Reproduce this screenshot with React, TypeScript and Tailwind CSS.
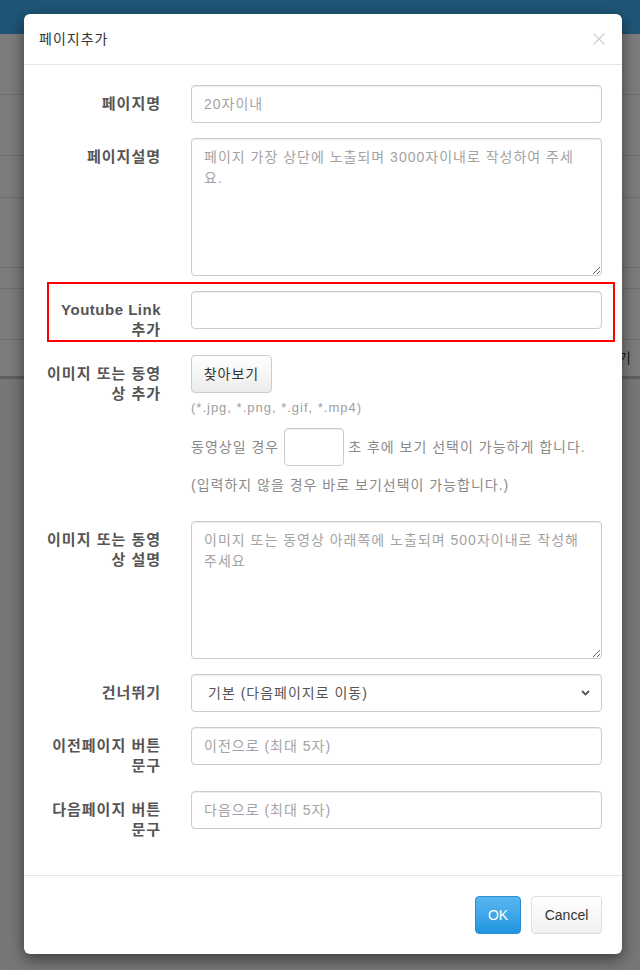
import React from "react";

function Label({ children }: { children: React.ReactNode }) {
  return (
    <div className="pt-[9px] text-right text-[15px] leading-[20px] font-bold text-[#555] tracking-[1px]">
      {children}
    </div>
  );
}

const inputCls =
  "block w-full h-[38px] rounded-[4px] border border-[#cccccc] bg-white px-[12px] text-[14px] tracking-[1px] text-[#555] shadow-[inset_0_1px_1px_rgba(0,0,0,0.075)] placeholder:text-[#a3a3a3] outline-none";

const textareaCls =
  "block w-full h-[138px] rounded-[4px] border border-[#cccccc] bg-white px-[12px] pt-[8px] text-[14px] tracking-[1px] leading-[21px] text-[#555] shadow-[inset_0_1px_1px_rgba(0,0,0,0.075)] placeholder:text-[#a3a3a3] outline-none resize-y";

export default function App() {
  return (
    <div className="relative w-[640px] min-h-[970px] bg-[#777777] overflow-hidden tracking-[1px] font-[family-name:'Liberation_Sans','Noto_Sans_CJK_KR',sans-serif]">
      {/* Background page (under backdrop) */}
      <div className="h-[34px] bg-[#1f5576]" />
      <div className="flex flex-col bg-[#7c7c7c]">
        <div className="h-[61px] border-b border-[#6d6d6d]" />
        <div className="h-[61px] border-b border-[#6d6d6d]" />
        <div className="h-[42px] border-b border-[#6d6d6d]" />
        <div className="h-[70px] border-b border-[#6d6d6d]" />
        <div className="h-[21px] border-b border-[#6d6d6d]" />
        <div className="h-[51px] border-b border-[#6d6d6d]" />
        <div className="h-[36px] flex items-center justify-end pr-[8px] text-[14px] text-[#1c1c1c]">
          미리보기
        </div>
        <div className="h-[3px] bg-[#5f5f5f]" />
      </div>

      {/* Modal */}
      <div className="absolute left-[24px] top-[14px] w-[598px] rounded-[6px] bg-white shadow-[0_5px_15px_rgba(0,0,0,0.5)]">
        <div className="h-[51px] flex items-center justify-between border-b border-[#e5e5e5] pl-[15px] pr-[17px]">
          <div className="text-[14px] text-[#333] leading-[20px]">페이지추가</div>
          <svg width="12" height="12" viewBox="0 0 12 12" className="block">
            <path d="M0.5 0.5 L11.5 11.5 M11.5 0.5 L0.5 11.5" stroke="#cfcfcf" strokeWidth="1.2" fill="none" />
          </svg>
        </div>

        <div className="flex flex-col gap-[15px] pt-[20px] pb-[35px] pl-[15px] pr-[20px]">
          <div className="grid grid-cols-[122px_1fr] gap-x-[30px]">
            <Label>페이지명</Label>
            <input className={inputCls} placeholder="20자이내" />
          </div>

          <div className="grid grid-cols-[122px_1fr] gap-x-[30px]">
            <Label>페이지설명</Label>
            <textarea
              className={textareaCls}
              placeholder={"페이지 가장 상단에 노출되며 3000자이내로 작성하여 주세\n요."}
            />
          </div>

          <div className="relative grid grid-cols-[122px_1fr] gap-x-[30px]">
            <div className="pointer-events-none absolute left-[8px] top-[-9px] h-[60px] w-[568px] border-2 border-[#ff0000]" />
            <Label>
              <span className="tracking-[0.5px]">Youtube Link</span>
              <br />
              추가
            </Label>
            <input className={inputCls} />
          </div>

          <div className="grid grid-cols-[122px_1fr] gap-x-[30px]">
            <Label>이미지 또는 동영상 추가</Label>
            <div className="flex flex-col items-start">
              <button className="h-[38px] w-[81px] rounded-[4px] border border-[#cccccc] bg-linear-to-b from-white to-[#ececec] text-[14px] text-[#333]">
                찾아보기
              </button>
              <div className="mt-[5px] text-[13px] leading-[20px] text-[#a0a0a0]">
                (*.jpg, *.png, *.gif, *.mp4)
              </div>
              <div className="mt-[10px] flex items-center text-[14px] text-[#8a8a8a]">
                <span>동영상일 경우</span>
                <input className="ml-[5px] mr-[4px] h-[38px] w-[60px] rounded-[4px] border border-[#cccccc] bg-white px-[8px] text-[14px] shadow-[inset_0_1px_1px_rgba(0,0,0,0.075)] outline-none" />
                <span>초 후에 보기 선택이 가능하게 합니다.</span>
              </div>
              <div className="mt-[9px] mb-[11px] text-[14px] leading-[20px] text-[#8a8a8a]">
                (입력하지 않을 경우 바로 보기선택이 가능합니다.)
              </div>
            </div>
          </div>

          <div className="grid grid-cols-[122px_1fr] gap-x-[30px]">
            <Label>이미지 또는 동영상 설명</Label>
            <textarea
              className={textareaCls}
              placeholder={"이미지 또는 동영상 아래쪽에 노출되며 500자이내로 작성해\n주세요"}
            />
          </div>

          <div className="grid grid-cols-[122px_1fr] gap-x-[30px]">
            <Label>건너뛰기</Label>
            <div className="relative">
              <select className="block w-full h-[38px] appearance-none rounded-[4px] border border-[#cccccc] bg-white pl-[16px] pr-[30px] text-[14px] tracking-[1px] text-[#555] shadow-[inset_0_1px_1px_rgba(0,0,0,0.075)] outline-none">
                <option>기본 (다음페이지로 이동)</option>
              </select>
              <svg
                width="9"
                height="6"
                viewBox="0 0 9 6"
                className="pointer-events-none absolute right-[12px] top-[16px]"
              >
                <path d="M1 1 L4.5 4.5 L8 1" stroke="#555" strokeWidth="1.8" fill="none" />
              </svg>
            </div>
          </div>

          <div className="grid grid-cols-[122px_1fr] gap-x-[30px]">
            <Label>이전페이지 버튼 문구</Label>
            <input className={inputCls} placeholder="이전으로 (최대 5자)" />
          </div>

          <div className="grid grid-cols-[122px_1fr] gap-x-[30px]">
            <Label>다음페이지 버튼 문구</Label>
            <input className={inputCls} placeholder="다음으로 (최대 5자)" />
          </div>
        </div>

        <div className="flex justify-end gap-[10px] border-t border-[#e5e5e5] pt-[20px] pb-[20px] pr-[20px]">
          <button className="h-[38px] w-[46px] rounded-[4px] border border-[#2790d4] bg-linear-to-b from-[#58b5ee] to-[#1d96e1] text-[14px] text-white tracking-normal">
            OK
          </button>
          <button className="h-[38px] w-[71px] rounded-[4px] border border-[#dddddd] bg-linear-to-b from-white to-[#f1f1f1] text-[14px] text-[#333] tracking-normal">
            Cancel
          </button>
        </div>
      </div>
    </div>
  );
}
